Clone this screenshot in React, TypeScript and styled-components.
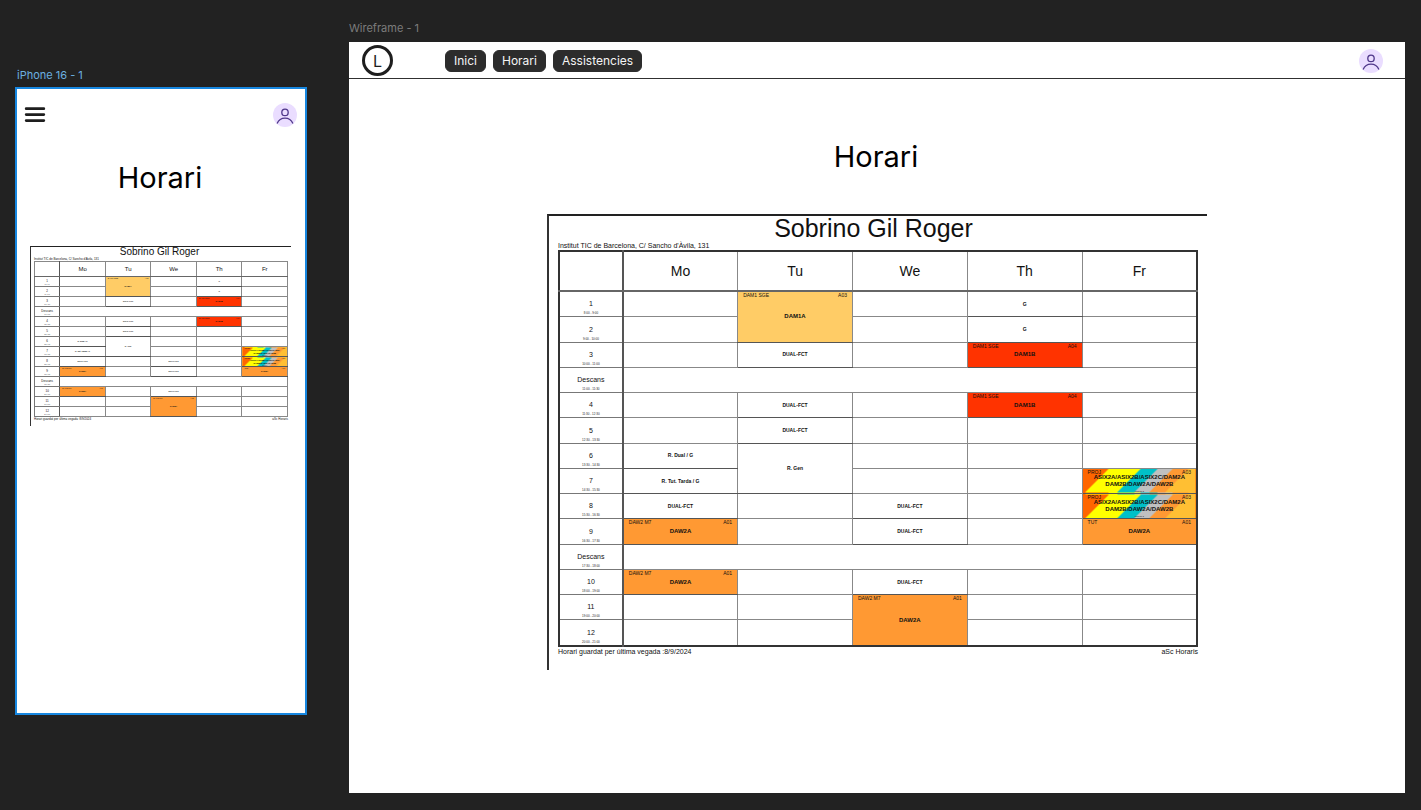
import React from "react";
import styled, { createGlobalStyle, css } from "styled-components";

const GlobalStyle = createGlobalStyle`
  *, *::before, *::after { box-sizing: border-box; }
  body {
    margin: 0;
    background: #222222;
    font-family: Inter, "Liberation Sans", sans-serif;
  }
`;

/* ---------- Canvas and frames ---------- */

const Canvas = styled.main`
  display: grid;
  grid-template-columns: 292fr 1056fr;
  column-gap: 42px;
  min-height: 100vh;
  padding: 20px 16px 17px 15px;
`;

const FrameColumn = styled.section<{ $offset?: number }>`
  display: flex;
  flex-direction: column;
  min-width: 0;
  padding-top: ${(p) => p.$offset ?? 0}px;
`;

const FrameLabel = styled.h2<{ $selected?: boolean }>`
  margin: 0;
  padding-left: ${(p) => (p.$selected ? 2 : 0)}px;
  font-size: 11px;
  font-weight: 400;
  line-height: 16px;
  height: ${(p) => (p.$selected ? 20 : 22)}px;
  color: ${(p) => (p.$selected ? "#6cb0e0" : "#7c7c7c")};
`;

const PhoneFrame = styled.div`
  aspect-ratio: 292 / 628;
  border: 2px solid #1787e0;
  background: #ffffff;
`;

const DesktopFrame = styled.div`
  flex: 1;
  background: #ffffff;
`;

const PhoneBar = styled.header`
  display: flex;
  align-items: center;
  justify-content: space-between;
  padding: 14px 8px 0 7px;
`;

const DesktopBar = styled.header`
  display: flex;
  align-items: center;
  height: 37px;
  padding: 1px 22px 0 13px;
  border-bottom: 1px solid #303030;
`;

const PlainButton = styled.button`
  display: flex;
  padding: 0;
  border: 0;
  background: none;
  cursor: pointer;
`;

const Logo = styled.a`
  display: flex;
  align-items: center;
  justify-content: center;
  width: 31px;
  height: 31px;
  border: 3px solid #1e1e1e;
  border-radius: 50%;
  color: #1e1e1e;
  font-size: 16px;
  line-height: 20px;
  text-decoration: none;
`;

const Nav = styled.nav`
  display: flex;
  flex: 1;
  gap: 7px;
  padding-left: 52px;
`;

const NavButton = styled.button`
  height: 22px;
  padding: 0 8px;
  border: 1px solid #2c2c2c;
  border-radius: 6px;
  background: #2c2c2c;
  color: #f5f5f5;
  font-family: inherit;
  font-size: 12px;
  line-height: 20px;
  cursor: pointer;
`;

const PageTitle = styled.h1<{ $top: number; $bottom: number }>`
  margin: 0;
  padding: ${(p) => p.$top}px 2px ${(p) => p.$bottom}px 0;
  font-size: 29px;
  font-weight: 400;
  line-height: 36px;
  text-align: center;
  color: #000000;
`;

const PhoneBody = styled.div`
  padding: 0 14px 0 13px;
`;

const DesktopBody = styled.div`
  width: 62.5%;
  margin: 0 auto;
`;

/* ---------- Timetable ---------- */

interface Scale {
  rule: number;
  edge: number;
  height: number;
  bottom: number;
  title: number;
  titleLine: number;
  note: number;
  noteLine: number;
  head: number;
  headHeight: number;
  slot: number;
  slotLine: number;
  time: number;
  timeLine: number;
  name: number;
  nameLine: number;
  small: number;
  tiny: number;
  inset: number;
}

const large: Scale = {
  rule: 2, edge: 9, height: 397, bottom: 14,
  title: 25, titleLine: 25, note: 7, noteLine: 9,
  head: 14, headHeight: 40,
  slot: 7, slotLine: 11, time: 3, timeLine: 6,
  name: 6, nameLine: 7, small: 5, tiny: 2, inset: 5,
};

const compact: Scale = {
  rule: 1, edge: 3, height: 156, bottom: 5,
  title: 10, titleLine: 10, note: 3, noteLine: 4,
  head: 6, headHeight: 15,
  slot: 3, slotLine: 4, time: 1, timeLine: 2,
  name: 2, nameLine: 3, small: 2, tiny: 1, inset: 2,
};

type Scaled = { $s: Scale };

const Sheet = styled.article<Scaled>`
  padding: 0 ${(p) => p.$s.edge}px ${(p) => p.$s.bottom}px 0;
  border-top: ${(p) => p.$s.rule}px solid #222222;
  border-left: ${(p) => p.$s.rule}px solid #333333;
  font-family: "Liberation Sans", Arial, sans-serif;
  color: #111111;
`;

const SheetTitle = styled.h2<Scaled>`
  margin: 0;
  font-size: ${(p) => p.$s.title}px;
  font-weight: 400;
  line-height: ${(p) => p.$s.titleLine}px;
  text-align: center;
`;

const SheetBody = styled.div<Scaled>`
  padding-left: ${(p) => p.$s.edge}px;
`;

const Note = styled.div<Scaled>`
  display: flex;
  justify-content: space-between;
  font-size: ${(p) => p.$s.note}px;
  line-height: ${(p) => p.$s.noteLine}px;
  white-space: nowrap;
`;

const Table = styled.table<Scaled>`
  width: 100%;
  height: ${(p) => p.$s.height}px;
  table-layout: fixed;
  border-collapse: collapse;
  border: ${(p) => p.$s.rule}px solid #333333;
  font-size: ${(p) => p.$s.name}px;
  line-height: ${(p) => p.$s.nameLine}px;

  td, th { padding: 0; }
`;

const SlotColumn = styled.col`
  width: 10%;
`;

const DayHead = styled.th<Scaled>`
  height: ${(p) => p.$s.headHeight}px;
  border: 1px solid #888888;
  border-bottom: ${(p) => p.$s.rule}px solid #666666;
  font-size: ${(p) => p.$s.head}px;
  line-height: ${(p) => p.$s.head}px;
  font-weight: 400;

  &:first-child { border-right: ${(p) => p.$s.rule}px solid #555555; }
`;

const SlotHead = styled.th<Scaled>`
  border: 1px solid #777777;
  border-right: ${(p) => p.$s.rule}px solid #555555;
  font-size: ${(p) => p.$s.slot}px;
  font-weight: 400;
  line-height: ${(p) => p.$s.slotLine}px;
  vertical-align: bottom;
`;

const Time = styled.small<Scaled>`
  display: block;
  padding-top: 1px;
  font-size: ${(p) => p.$s.time}px;
  line-height: ${(p) => p.$s.timeLine}px;
  color: #222222;
`;

type Tone = "plain" | "amber" | "red" | "orange" | "mixed";

const tones: Record<Tone, string> = {
  plain: "transparent",
  amber: "#ffcc66",
  red: "#ff3300",
  orange: "#ff9933",
  mixed:
    "linear-gradient(135deg, #ff6600 19%, #ffff00 19% 43%, #00c0c8 43% 55%, #c0c0c0 55% 66%, #ff9933 66% 78%, #ffbf33 78%)",
};

const Cell = styled.td<Scaled & { $tone?: Tone }>`
  position: relative;
  border: 1px solid #888888;
  background: ${(p) => tones[p.$tone ?? "plain"]};
  text-align: center;
  vertical-align: middle;
  font-weight: 700;
  white-space: pre-line;
  ${(p) =>
    p.$tone &&
    css`
      border-bottom-color: #555555;
    `}
  ${(p) =>
    p.$tone === "plain" &&
    css`
      font-size: ${p.$s.small}px;
    `}
`;

const Corner = styled.span<Scaled & { $side: "left" | "right" }>`
  position: absolute;
  top: 0;
  ${(p) => p.$side}: ${(p) => p.$s.inset}px;
  font-size: ${(p) => p.$s.small}px;
  font-weight: 400;
`;

const Group = styled.span<Scaled>`
  position: absolute;
  right: 0;
  bottom: 0;
  left: 0;
  font-size: ${(p) => p.$s.tiny}px;
  line-height: ${(p) => p.$s.time}px;
  font-weight: 400;
`;

interface Lesson {
  name: string;
  tone?: Tone;
  span?: number;
  code?: string;
  room?: string;
  group?: string;
}

interface Row {
  slot: string;
  time: string;
  /* Lessons by day index; "taken" marks a day filled by the row above. */
  days?: Record<number, Lesson | "taken">;
  pause?: boolean;
}

const dual: Lesson = { name: "DUAL-FCT" };
const guard: Lesson = { name: "G" };
const dam1b: Lesson = { name: "DAM1B", tone: "red", code: "DAM1 SGE", room: "A04" };
const daw2a: Lesson = { name: "DAW2A", tone: "orange", code: "DAW2 M7", room: "A01" };
const project: Lesson = {
  name: "ASIX2A/ASIX2B/ASIX2C/DAM2A\nDAM2B/DAW2A/DAW2B",
  tone: "mixed",
  code: "PROJ",
  room: "A03",
  group: "Projecte 2",
};

const dayNames = ["Mo", "Tu", "We", "Th", "Fr"];

const rows: Row[] = [
  {
    slot: "1", time: "8:00 - 9:00",
    days: { 1: { name: "DAM1A", tone: "amber", span: 2, code: "DAM1 SGE", room: "A03" }, 3: guard },
  },
  { slot: "2", time: "9:00 - 10:00", days: { 1: "taken", 3: guard } },
  { slot: "3", time: "10:00 - 11:00", days: { 1: dual, 3: dam1b } },
  { slot: "Descans", time: "11:00 - 11:30", pause: true },
  { slot: "4", time: "11:30 - 12:30", days: { 1: dual, 3: dam1b } },
  { slot: "5", time: "12:30 - 13:30", days: { 1: dual } },
  { slot: "6", time: "13:30 - 14:30", days: { 0: { name: "R. Dual / G" }, 1: { name: "R. Gen", span: 2 } } },
  { slot: "7", time: "14:30 - 15:30", days: { 0: { name: "R. Tut. Tarda / G" }, 1: "taken", 4: project } },
  { slot: "8", time: "15:30 - 16:30", days: { 0: dual, 2: dual, 4: project } },
  { slot: "9", time: "16:30 - 17:30", days: { 0: daw2a, 2: dual, 4: { ...daw2a, code: "TUT" } } },
  { slot: "Descans", time: "17:30 - 18:00", pause: true },
  { slot: "10", time: "18:00 - 19:00", days: { 0: daw2a, 2: dual } },
  { slot: "11", time: "19:00 - 20:00", days: { 2: { ...daw2a, span: 2 } } },
  { slot: "12", time: "20:00 - 21:00", days: { 2: "taken" } },
];

function LessonCell({ lesson, s }: { lesson?: Lesson | "taken"; s: Scale }) {
  if (lesson === "taken") return null;
  if (!lesson) return <Cell $s={s} />;
  return (
    <Cell $s={s} $tone={lesson.tone ?? "plain"} rowSpan={lesson.span}>
      {lesson.code && <Corner $s={s} $side="left">{lesson.code}</Corner>}
      {lesson.name}
      {lesson.room && <Corner $s={s} $side="right">{lesson.room}</Corner>}
      {lesson.group && <Group $s={s}>{lesson.group}</Group>}
    </Cell>
  );
}

function Timetable({ s }: { s: Scale }) {
  return (
    <Sheet $s={s}>
      <SheetTitle $s={s}>Sobrino Gil Roger</SheetTitle>
      <SheetBody $s={s}>
        <Note $s={s}>Institut TIC de Barcelona, C/ Sancho d'Àvila, 131</Note>
        <Table $s={s}>
          <colgroup>
            <SlotColumn />
            {dayNames.map((day) => <col key={day} />)}
          </colgroup>
          <thead>
            <tr>
              <DayHead $s={s} />
              {dayNames.map((day) => (
                <DayHead key={day} $s={s} scope="col">{day}</DayHead>
              ))}
            </tr>
          </thead>
          <tbody>
            {rows.map((row) => (
              <tr key={row.time}>
                <SlotHead $s={s} scope="row">
                  {row.slot}
                  <Time $s={s}>{row.time}</Time>
                </SlotHead>
                {row.pause ? (
                  <Cell $s={s} colSpan={5} />
                ) : (
                  dayNames.map((day, i) => (
                    <LessonCell key={day} lesson={row.days?.[i]} s={s} />
                  ))
                )}
              </tr>
            ))}
          </tbody>
        </Table>
        <Note $s={s}>
          <span>Horari guardat per última vegada :8/9/2024</span>
          <span>aSc Horaris</span>
        </Note>
      </SheetBody>
    </Sheet>
  );
}

/* ---------- Icons ---------- */

function Avatar() {
  return (
    <PlainButton aria-label="Perfil">
      <svg width="24" height="24" viewBox="0 0 24 24" fill="none" stroke="#4f378a" strokeWidth="1.3">
        <circle cx="12" cy="12" r="12" fill="#eaddff" stroke="none" />
        <circle cx="12" cy="9.4" r="3.2" />
        <path d="M4.1 20.4C5.6 17 8.5 15.2 12 15.2s6.4 1.8 7.9 5.2" />
      </svg>
    </PlainButton>
  );
}

function MenuIcon() {
  return (
    <PlainButton aria-label="Menú">
      <svg width="22" height="24" viewBox="0 0 22 24" stroke="#1e1e1e" strokeWidth="2.8" strokeLinecap="round">
        <path d="M2.2 5.7h17.6M2.2 11.6h17.6M2.2 17.6h17.6" />
      </svg>
    </PlainButton>
  );
}

export default function App() {
  return (
    <>
      <GlobalStyle />
      <Canvas>
        <FrameColumn $offset={47}>
          <FrameLabel $selected>iPhone 16 - 1</FrameLabel>
          <PhoneFrame>
            <PhoneBar>
              <MenuIcon />
              <Avatar />
            </PhoneBar>
            <PageTitle $top={33} $bottom={50}>Horari</PageTitle>
            <PhoneBody>
              <Timetable s={compact} />
            </PhoneBody>
          </PhoneFrame>
        </FrameColumn>
        <FrameColumn>
          <FrameLabel>Wireframe - 1</FrameLabel>
          <DesktopFrame>
            <DesktopBar>
              <Logo href="#">L</Logo>
              <Nav>
                <NavButton>Inici</NavButton>
                <NavButton>Horari</NavButton>
                <NavButton>Assistencies</NavButton>
              </Nav>
              <Avatar />
            </DesktopBar>
            <PageTitle $top={60} $bottom={39}>Horari</PageTitle>
            <DesktopBody>
              <Timetable s={large} />
            </DesktopBody>
          </DesktopFrame>
        </FrameColumn>
      </Canvas>
    </>
  );
}
